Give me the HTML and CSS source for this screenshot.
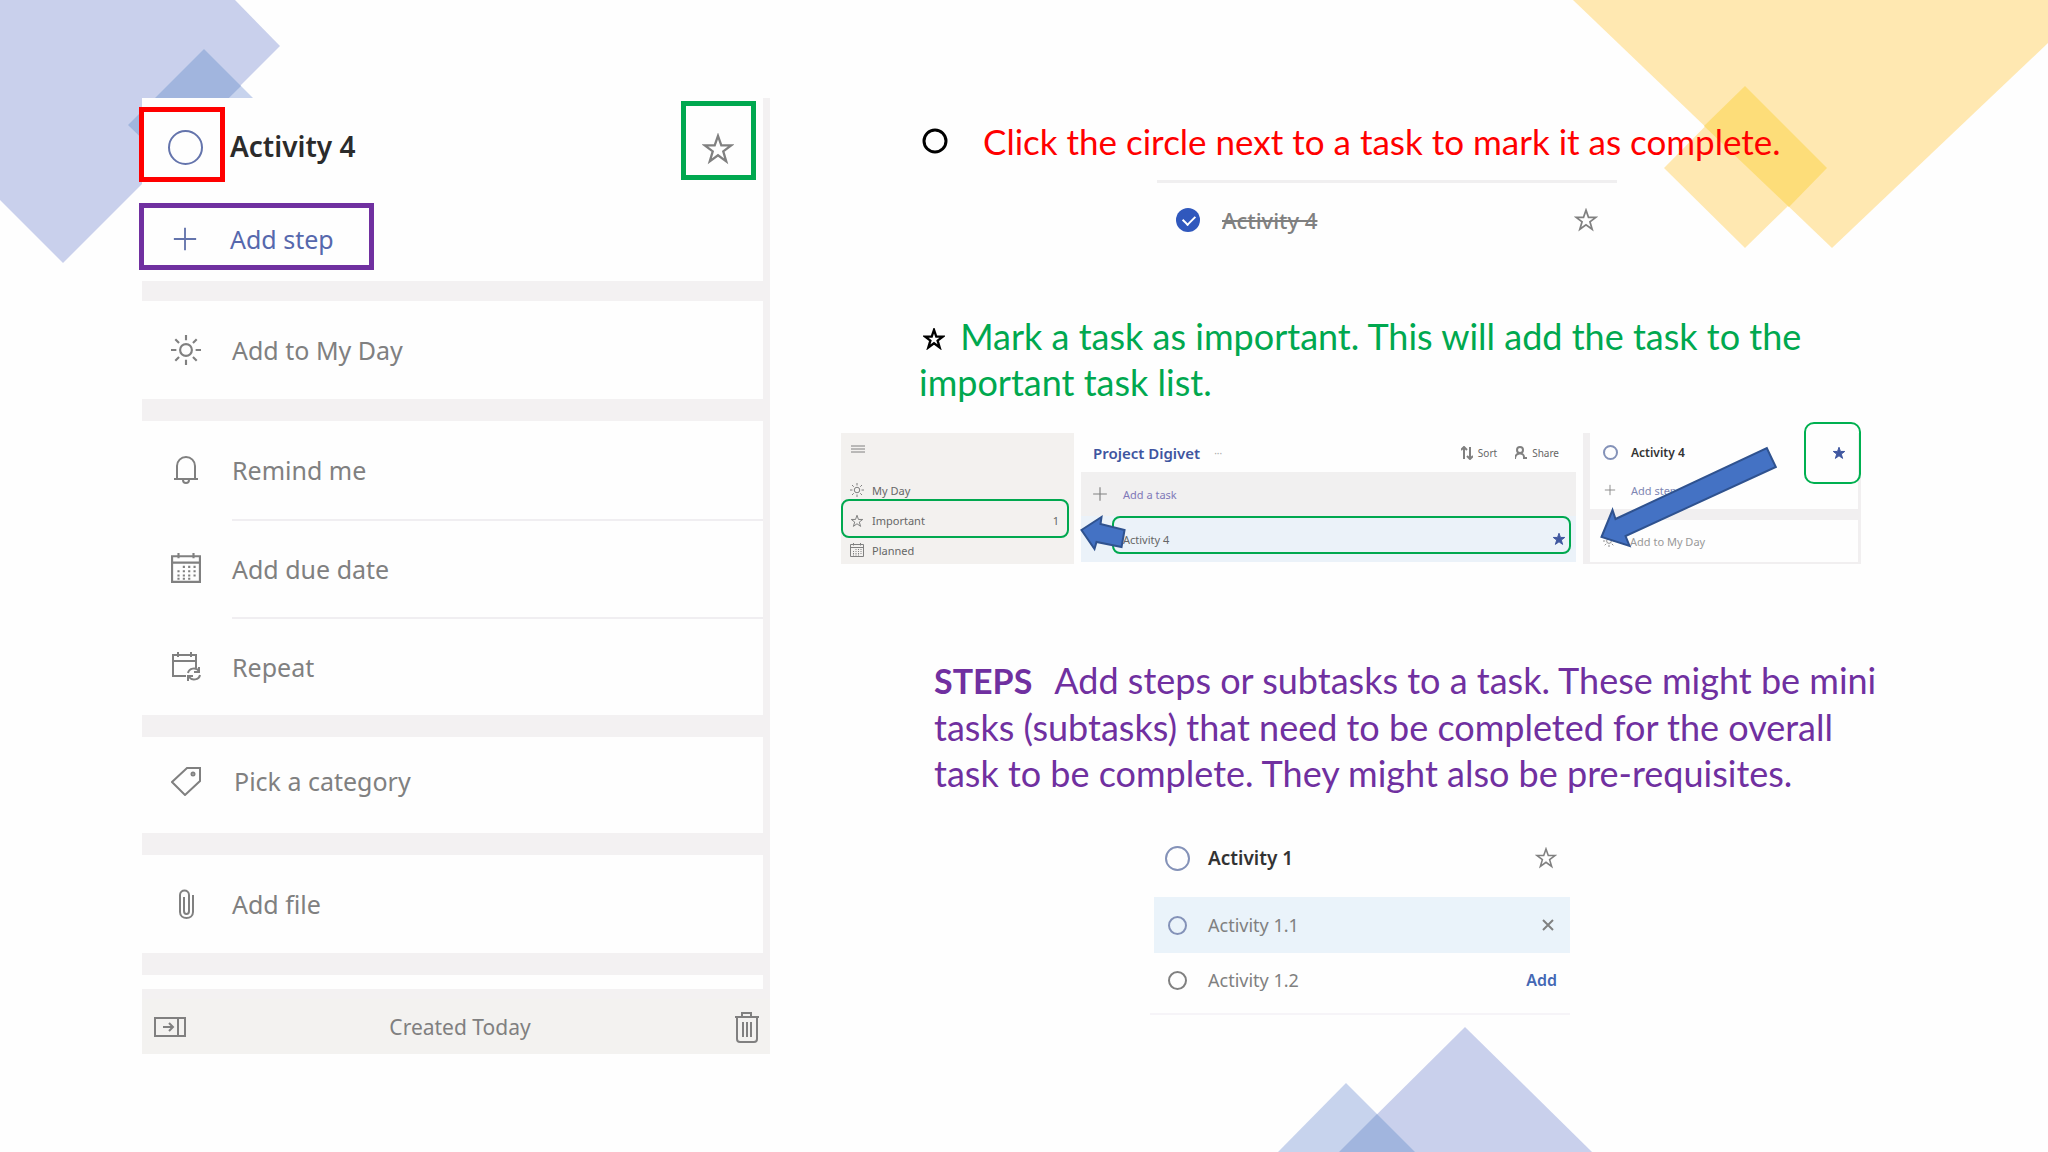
FILE: index.html
```html
<!DOCTYPE html>
<html lang="en">
<head>
    <meta charset="UTF-8">
    <meta name="viewport" content="width=device-width, initial-scale=1.0">
    <title>Tasks and Steps</title>
    <link rel="stylesheet" href="styles.css">
</head>
<body>
    <!-- shared icons -->
    <svg class="symbols" aria-hidden="true">
        <symbol id="star" viewBox="0 0 28 28"><path d="M14 2.5l2.9 8.4h8.6l-6.9 5.2 2.6 8.7-7.2-5.3-7.2 5.3 2.6-8.7-6.9-5.2h8.6z"/></symbol>
        <symbol id="plus" viewBox="0 0 28 28"><path d="M14 2v24M2 14h24"/></symbol>
        <symbol id="sun" viewBox="0 0 28 28"><circle cx="14" cy="14" r="5.5"/><path d="M14 0v5M14 23v5M0 14h5M23 14h5M4 4l3.5 3.5M20.500 20.500l3.500 3.500M4 24l3.500-3.500M20.500 7.500L24 4"/></symbol>
        <symbol id="calendar" viewBox="0 0 28 28"><path d="M1 3h26v24H1zM1 9h26M7 0v5M21 0v5"/><path stroke-dasharray="2 3" d="M11 13h13M6 17h18M6 21h18M6 24h13"/></symbol>
    </svg>

    <svg class="corner corner-left" width="281" height="264" viewBox="0 0 281 264" aria-hidden="true">
        <path fill="#c9d0ec" d="M0 0h235l45 46L63 263 0 200z"/>
        <path fill="#c7d3ed" d="M204 49l76 76-76 76-76-76z"/>
        <path fill="#a1b5de" d="M204 49l37 37L165 161l-37-36z"/>
    </svg>
    <svg class="corner corner-right" width="476" height="249" viewBox="0 0 476 249" aria-hidden="true">
        <path fill="#ffe8b1" d="M1 0h475v43L260 248z"/>
        <path fill="#ffe8b1" d="M173 86l82 82-82 80-81-80z"/>
        <path fill="#fddd79" d="M173 86l82 82-38 39L132 126z"/>
    </svg>
    <svg class="corner corner-bottom" width="314" height="125" viewBox="0 0 314 125" aria-hidden="true">
        <path fill="#c9d0ec" d="M187 0l127 125H61z"/>
        <path fill="#c7d3ed" d="M68 56l69 69H0z"/>
        <path fill="#a1b5de" d="M99 87l38 38H61z"/>
    </svg>

    <main class="slide">
        <section class="panel">
            <header class="panel-head">
                <div class="title-row">
                    <span class="mark mark-red"><input type="checkbox" class="circle" id="task4"></span>
                    <label class="task-title" for="task4">Activity 4</label>
                    <button class="mark mark-green" aria-label="Mark as important"><svg class="icon" width="32" height="32"><use href="#star"/></svg></button>
                </div>
                <button class="mark mark-purple"><svg class="icon" width="26" height="26"><use href="#plus"/></svg>Add step</button>
            </header>

            <div class="card">
                <button class="option"><svg class="icon" width="30" height="30"><use href="#sun"/></svg><span>Add to My Day</span></button>
            </div>
            <div class="card">
                <button class="option">
                    <svg class="icon" width="30" height="30" viewBox="0 0 30 30"><path d="M3 24h24M6 24V11c0-5 4-9 9-9s9 4 9 9v13M12 25c0 4 6 4 6 0"/></svg>
                    <span>Remind me</span>
                </button>
                <button class="option"><svg class="icon" width="30" height="30"><use href="#calendar"/></svg><span>Add due date</span></button>
                <button class="option">
                    <svg class="icon" width="30" height="30" viewBox="0 0 30 30"><path d="M15 25H2V4h23v13M2 10h23M7 1v5M20 1v5M17 22c1-5 8-6 11-2M28 16v5h-5M29 24c-1 5-8 6-11 2M17 30v-5h5"/></svg>
                    <span>Repeat</span>
                </button>
            </div>
            <div class="card">
                <button class="option category">
                    <svg class="icon" width="30" height="30" viewBox="0 0 30 30"><path d="M16 2h13v13L14 29 1 16z"/><circle cx="22" cy="8" r="1.500"/></svg>
                    <span>Pick a category</span>
                </button>
            </div>
            <div class="card">
                <button class="option">
                    <svg class="icon" width="30" height="30" viewBox="0 0 30 30"><path d="M22 6v17c0 8-13 8-13 0V6c0-6 9-6 9 0v16c0 4-5 4-5 0V8"/></svg>
                    <span>Add file</span>
                </button>
            </div>
            <div class="card card-cut"></div>

            <footer class="panel-foot">
                <button class="plain" aria-label="Hide detail view">
                    <svg class="icon" width="32" height="20" viewBox="0 0 32 20"><path d="M1 1h30v18H1zM24 1v18M9 10h10M15 6l4 4-4 4"/></svg>
                </button>
                <span>Created Today</span>
                <button class="plain" aria-label="Delete task">
                    <svg class="icon" width="26" height="32" viewBox="0 0 26 32"><path d="M1 6h24M8 6V2h9v4M3 6v22c0 2 1 3 3 3h14c2 0 3-1 3-3V6M9 11v15M13 11v15M17 11v15"/></svg>
                </button>
            </footer>
        </section>

        <section class="notes">
            <p class="note note-red">
                <svg class="bullet" width="26" height="26" viewBox="0 0 26 26"><circle cx="13" cy="13" r="11"/></svg>
                <span>Click the circle next to a task to mark it as complete.</span>
            </p>
            <div class="done-task">
                <input type="checkbox" class="circle" id="done4" checked>
                <label for="done4">Activity 4</label>
                <button class="plain" aria-label="Mark as important"><svg class="icon" width="24" height="24"><use href="#star"/></svg></button>
            </div>

            <p class="note note-green">
                <svg class="bullet" width="22" height="22"><use href="#star"/></svg>
                Mark a task as important. This will add the task to the<br>important task list.
            </p>
            <div class="app">
                <nav class="app-nav">
                    <svg class="icon menu" width="14" height="14" viewBox="0 0 14 14"><path d="M0 5h14M0 8h14M0 11h14"/></svg>
                    <a href="#"><svg class="icon" width="14" height="14"><use href="#sun"/></svg>My Day</a>
                    <a href="#" class="boxed"><svg class="icon" width="14" height="14"><use href="#star"/></svg>Important<b>1</b></a>
                    <a href="#"><svg class="icon" width="14" height="14"><use href="#calendar"/></svg>Planned</a>
                </nav>
                <div class="app-list">
                    <div class="list-head">
                        <h2>Project Digivet</h2>
                        <span class="dots">···</span>
                        <button class="plain"><svg class="icon" width="12" height="14" viewBox="0 0 12 14"><path d="M3 13V1M0 4l3-3 3 3M9 1v12M6 10l3 3 3-3"/></svg>Sort</button>
                        <button class="plain"><svg class="icon" width="12" height="14" viewBox="0 0 12 14"><circle cx="5" cy="4" r="3"/><path d="M0 13c0-7 9-7 9-2M8 12h4"/></svg>Share</button>
                    </div>
                    <button class="list-add"><svg class="icon" width="16" height="16"><use href="#plus"/></svg>Add a task</button>
                    <div class="list-task">
                        <div class="boxed">Activity 4<svg class="icon filled" width="14" height="14"><use href="#star"/></svg></div>
                    </div>
                </div>
                <div class="app-detail">
                    <div class="detail-card">
                        <div class="detail-row"><input type="checkbox" class="circle" id="detail4"><label for="detail4">Activity 4</label></div>
                        <button class="detail-row step"><svg class="icon" width="12" height="12"><use href="#plus"/></svg>Add step</button>
                    </div>
                    <button class="detail-card detail-row"><svg class="icon" width="12" height="12"><use href="#sun"/></svg>Add to My Day</button>
                    <div class="star-box"><svg class="icon filled" width="14" height="14"><use href="#star"/></svg></div>
                </div>
                <svg class="arrows" viewBox="0 0 1018 131" preserveAspectRatio="none" aria-hidden="true">
                    <path d="M759 104l11-27 3 9 151-71 9 19-150 69 4 10z"/>
                    <path d="M240 97l20-13-1 7 24 6-3 17-25-5-2 7z"/>
                </svg>
            </div>

            <p class="note note-purple"><strong>STEPS</strong>Add steps or subtasks to a task. These might be mini<br>tasks (subtasks) that need to be completed for the overall<br>task to be complete. They might also be pre-requisites.</p>
            <div class="steps">
                <div class="step-row step-main">
                    <input type="checkbox" class="circle" id="act1"><label for="act1">Activity 1</label>
                    <button class="plain" aria-label="Mark as important"><svg class="icon" width="22" height="22"><use href="#star"/></svg></button>
                </div>
                <div class="step-row step-active">
                    <input type="checkbox" class="circle" id="act11"><label for="act11">Activity 1.1</label>
                    <button class="plain" aria-label="Remove step"><svg class="icon" width="18" height="18" viewBox="0 0 18 18"><path d="M4 4l10 10M14 4L4 14"/></svg></button>
                </div>
                <div class="step-row step-new">
                    <input type="checkbox" class="circle" id="act12"><label for="act12">Activity 1.2</label>
                    <button class="plain add">Add</button>
                </div>
            </div>
        </section>
    </main>
</body>
</html>
```
FILE: styles.css
```css
* {
    box-sizing: border-box;
}
body {
    margin: 0;
    position: relative;
    min-height: 100vh;
    background: #fefefe;
    font-family: "Noto Sans", "Open Sans", sans-serif;
    color: #808080;
    overflow-x: hidden;
}
button {
    font: inherit;
    color: inherit;
    background: none;
    border: 0;
    padding: 0;
    text-align: left;
    cursor: pointer;
}
.symbols {
    position: absolute;
    width: 0;
    height: 0;
}
.icon {
    flex: none;
    fill: none;
    stroke: #808080;
    stroke-width: 2;
}
.icon.filled {
    fill: #3f57a0;
    stroke: #3f57a0;
}
.plain {
    display: flex;
    align-items: center;
}
.circle {
    appearance: none;
    flex: none;
    margin: 0;
    width: 24px;
    height: 24px;
    border: 2px solid #8492b8;
    border-radius: 50%;
}

/* background diamonds */
.corner {
    position: absolute;
    z-index: -1;
}
.corner-left {
    top: 0;
    left: 0;
}
.corner-right {
    top: 0;
    right: 0;
}
.corner-bottom {
    bottom: 0;
    left: 62.4%;
}

.slide {
    display: grid;
    grid-template-columns: 628fr 1020fr;
    gap: 71px;
    align-items: start;
    padding: 98px 187px 90px 142px;
}

/* task detail panel */
.panel {
    min-width: 0;
    background: #f3f1f2;
}
.panel-head {
    background: #fefefe;
    margin-right: 7px;
    padding: 3px 0 11px;
}
.title-row {
    display: flex;
    align-items: flex-end;
    margin-bottom: 21px;
}
.mark {
    display: flex;
    align-items: center;
    border: 5px solid;
}
.mark-red {
    width: 86px;
    height: 75px;
    margin-left: -3px;
    padding: 6px 0 0 24px;
    border-color: #ff0000;
}
.mark-red .circle {
    width: 35px;
    height: 35px;
    border-color: #6474ac;
}
.task-title {
    flex: 1;
    padding: 4px 0 0 5px;
    font-size: 28px;
    font-weight: 600;
    line-height: 71px;
    color: #2b2b2b;
}
.mark-green {
    width: 75px;
    height: 79px;
    margin: 0 7px 2px 0;
    padding: 16px 0 0 16px;
    border-color: #00a84f;
}
.mark-purple {
    width: 235px;
    height: 67px;
    margin-left: -3px;
    padding: 4px 0 0 28px;
    gap: 32px;
    border-color: #7030a0;
    font-size: 25px;
    color: #5668ad;
}
.mark-purple .icon {
    stroke: #6474ac;
}
.card {
    background: #fefefe;
    margin: 20px 7px 0 0;
}
.card + .card {
    margin-top: 22px;
}
.option {
    display: flex;
    align-items: center;
    width: 100%;
    height: 98px;
    padding-left: 29px;
    gap: 31px;
    font-size: 25px;
}
.option span {
    flex: 1;
    line-height: 96px;
}
.option + .option span {
    border-top: 2px solid #f0eef1;
}
.option.category {
    height: 96px;
    padding-bottom: 8px;
    gap: 33px;
}
.option.category span {
    line-height: 88px;
}
.card-cut {
    height: 14px;
}
.panel-foot {
    display: flex;
    align-items: center;
    justify-content: space-between;
    margin-top: 10px;
    height: 55px;
    padding: 0 10px 0 12px;
    background: #f3f2f0;
    font-size: 21px;
}

/* notes */
.notes {
    min-width: 0;
}
.note {
    margin: 0;
    font-family: Lato, sans-serif;
    font-size: 36px;
    line-height: 46px;
    white-space: nowrap;
}
.bullet {
    fill: none;
    stroke: #000;
    stroke-width: 3;
}
.note-red {
    display: flex;
    align-items: center;
    gap: 35px;
    padding: 20px 0 0 81px;
    font-size: 35px;
    color: #ff0000;
}
.note-green {
    padding-left: 78px;
    color: #00a84f;
}
.note-green .bullet {
    margin: 0 6px 0 4px;
}
.note-purple {
    padding-left: 93px;
    color: #7030a0;
}
.note-purple strong {
    margin-right: 22px;
    font-size: 34px;
}
.done-task {
    display: flex;
    align-items: center;
    width: 460px;
    height: 76px;
    margin: 16px 0 57px 316px;
    padding: 0 19px;
    gap: 22px;
    border-top: 3px solid #f0eff0;
    font-size: 22px;
}
.done-task label {
    flex: 1;
    font-weight: 500;
    text-decoration: line-through;
}
.done-task .circle {
    border: 0;
    background: #3058bd;
    position: relative;
}
.done-task .circle::after {
    content: "";
    position: absolute;
    left: 7px;
    top: 7px;
    width: 10px;
    height: 6px;
    border: solid #fff;
    border-width: 0 0 2px 2px;
    transform: rotate(-45deg);
}

/* small app window */
.app {
    position: relative;
    display: grid;
    grid-template-columns: 233fr 495fr 278fr;
    column-gap: 7px;
    height: 131px;
    margin: 28px 0 93px;
    font-size: 11px;
    color: #666;
}
.boxed {
    border: 2px solid #00a84f;
    border-radius: 8px;
}
.app-nav {
    display: flex;
    flex-direction: column;
    background: #f3f1ef;
}
.app-nav .menu {
    margin: 8px 0 26px 10px;
    stroke-width: 1;
}
.app-nav a {
    display: flex;
    align-items: center;
    gap: 8px;
    height: 18px;
    padding-left: 9px;
    color: inherit;
    text-decoration: none;
}
.app-nav a.boxed {
    height: 39px;
    margin-right: 5px;
    padding: 4px 8px 0 7px;
}
.app-nav a:last-child {
    height: 24px;
}
.app-nav b {
    margin-left: auto;
    font-weight: 400;
}
.list-head {
    display: flex;
    align-items: center;
    height: 39px;
    padding: 0 17px 0 12px;
    font-size: 10px;
}
.list-head h2 {
    margin: 0;
    font-size: 15px;
    font-weight: 600;
    line-height: 20px;
    color: #3f55a0;
}
.list-head .dots {
    flex: 1;
    padding-left: 14px;
    color: #aaa;
}
.list-head button {
    gap: 5px;
    margin-left: 18px;
}
.list-add {
    display: flex;
    align-items: center;
    gap: 15px;
    width: 100%;
    height: 44px;
    padding-left: 11px;
    background: #f1f0f0;
    color: #8078b8;
}
.list-task {
    height: 46px;
    padding: 0 5px 0 31px;
    background: #ebf2f9;
}
.list-task .boxed {
    display: flex;
    align-items: center;
    justify-content: space-between;
    height: 38px;
    padding: 8px 3px 0 9px;
}
.app-detail {
    position: relative;
    border: solid #f1eff0;
    border-width: 0 3px 2px 7px;
    background: #f1eff0;
}
.detail-card {
    background: #fefefe;
    width: 100%;
    height: 76px;
}
.detail-row {
    display: flex;
    align-items: center;
    gap: 13px;
    height: 38px;
    padding-left: 13px;
}
.detail-row label {
    font-size: 12px;
    font-weight: 600;
    color: #333;
}
.detail-row .circle {
    width: 15px;
    height: 15px;
}
.detail-row.step {
    gap: 15px;
    padding-left: 14px;
    color: #7f86b3;
}
.detail-card.detail-row {
    height: 42px;
    margin-top: 11px;
    gap: 15px;
    color: #999;
}
.star-box {
    position: absolute;
    top: -11px;
    right: -3px;
    display: flex;
    align-items: center;
    justify-content: flex-end;
    width: 57px;
    height: 62px;
    padding-right: 13px;
    border: 2px solid #00b050;
    border-radius: 10px;
}
.arrows {
    position: absolute;
    inset: 0;
    width: 100%;
    height: 100%;
    fill: #4472c4;
    stroke: #2f528f;
    stroke-width: 2;
}

/* steps example */
.steps {
    width: 420px;
    margin: 27px 0 0 309px;
    padding-left: 4px;
    border-bottom: 2px solid #f6f4f8;
    font-size: 18px;
}
.step-row {
    display: flex;
    align-items: center;
    height: 60px;
    padding: 0 13px 0 14px;
    gap: 21px;
}
.step-row label {
    flex: 1;
}
.step-row .circle {
    width: 19px;
    height: 19px;
}
.step-main {
    height: 74px;
    padding: 0 13px 4px 11px;
    gap: 18px;
}
.step-main .circle {
    width: 25px;
    height: 25px;
}
.step-main label {
    font-size: 19px;
    font-weight: 600;
    color: #333;
}
.step-active {
    height: 56px;
    background: #eaf3fa;
}
.step-new {
    padding-bottom: 6px;
}
.step-new .circle {
    border-color: #808080;
}
.add {
    font-size: 16px;
    font-weight: 600;
    color: #4468b4;
}
```
